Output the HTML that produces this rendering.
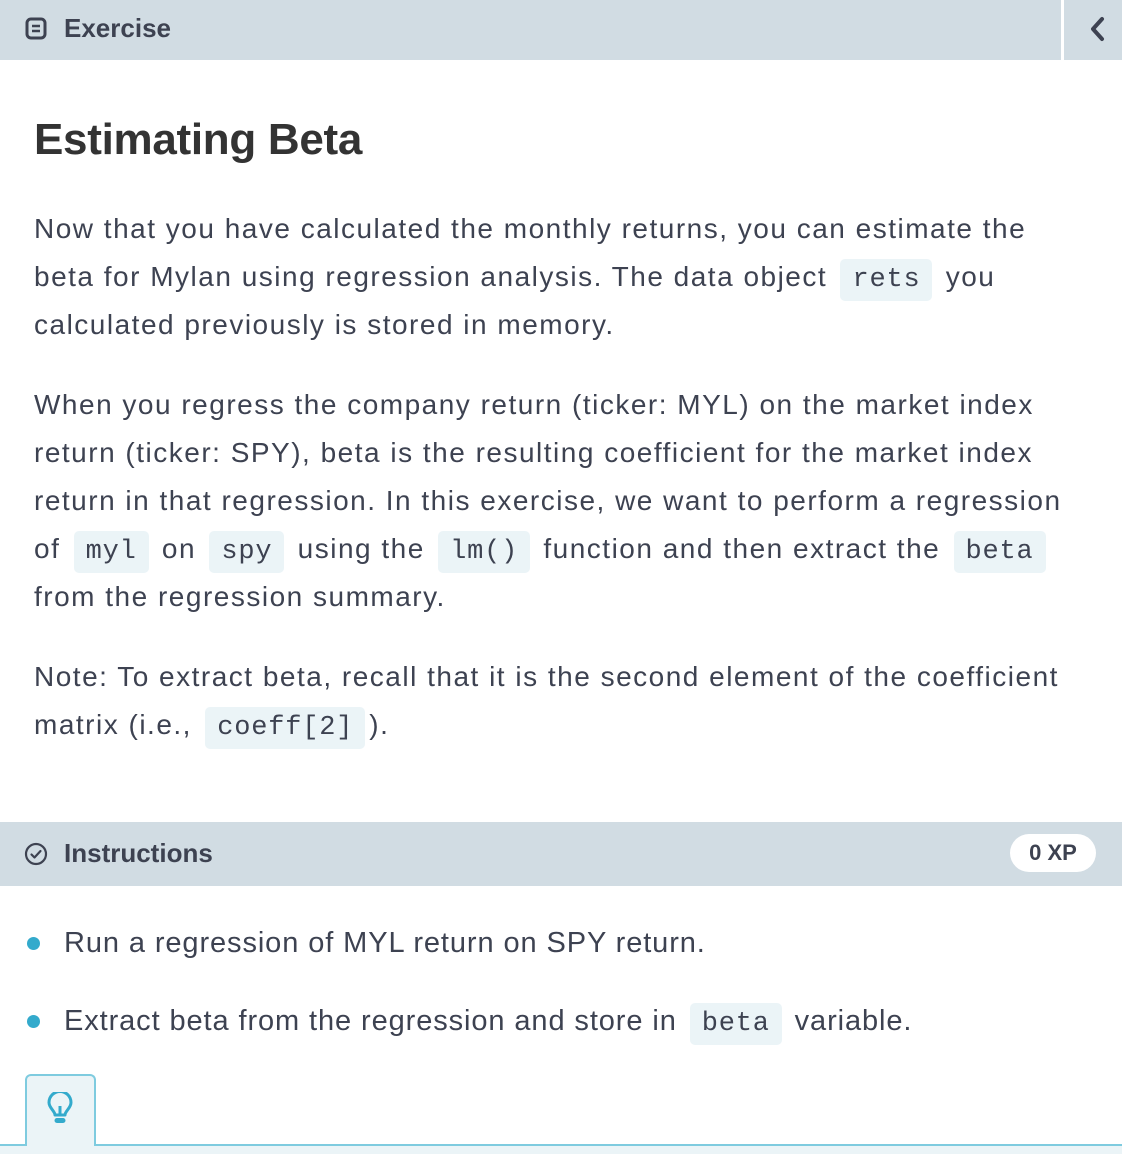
<!DOCTYPE html>
<html><head><meta charset="utf-8"><style>
*{margin:0;padding:0;box-sizing:border-box}
body{width:1122px;height:1154px;background:#fff;position:relative;overflow:hidden;font-family:"Liberation Sans",sans-serif;color:#3d4251}
.hdr{position:absolute;left:0;top:0;width:1122px;height:60px;background:#d1dce3}
.sep{position:absolute;left:1061px;top:0;width:3px;height:60px;background:#fff}
.htxt{position:absolute;left:64px;top:13px;font-size:26px;font-weight:bold;color:#3d4251}
h1{position:absolute;left:34px;top:115px;font-size:44px;font-weight:bold;color:#333;letter-spacing:-0.3px}
.l{position:absolute;left:34px;font-size:28px;white-space:nowrap;height:48px;line-height:48px;letter-spacing:1.5px}
code{font-family:"Liberation Mono",monospace;font-size:27px;background:#ebf4f7;border-radius:5px;padding:6px 12px;margin:0 4px;color:#3d4251;letter-spacing:0.8px}
.ibar{position:absolute;left:0;top:822px;width:1122px;height:64px;background:#d1dce3}
.xp{position:absolute;left:1010px;top:834px;width:86px;height:38px;border-radius:19px;background:#fff;font-size:22px;font-weight:bold;text-align:center;line-height:38px}
.dot{position:absolute;left:27px;width:13px;height:13px;border-radius:50%;background:#33aacc}
</style></head><body>
<div class="hdr"></div><div class="sep"></div>
<svg style="position:absolute;left:25px;top:17px" width="22" height="24" viewBox="0 0 22 24"><rect x="2" y="2" width="18" height="19" rx="4" fill="none" stroke="#3d4251" stroke-width="3"/><line x1="7" y1="9" x2="15" y2="9" stroke="#3d4251" stroke-width="2.5"/><line x1="7" y1="14" x2="15" y2="14" stroke="#3d4251" stroke-width="2.5"/></svg>
<div class="htxt">Exercise</div>
<svg style="position:absolute;left:1088px;top:16px" width="20" height="26" viewBox="0 0 20 26"><path d="M14 3 L5 13 L14 23" fill="none" stroke="#3d4251" stroke-width="4" stroke-linecap="round" stroke-linejoin="round"/></svg>
<h1>Estimating Beta</h1>
<div class="l" style="top:205px">Now that you have calculated the monthly returns, you can estimate the</div>
<div class="l" style="top:253px">beta for Mylan using regression analysis. The data object <code>rets</code> you</div>
<div class="l" style="top:301px">calculated previously is stored in memory.</div>
<div class="l" style="top:381px">When you regress the company return (ticker: MYL) on the market index</div>
<div class="l" style="top:429px">return (ticker: SPY), beta is the resulting coefficient for the market index</div>
<div class="l" style="top:477px">return in that regression. In this exercise, we want to perform a regression</div>
<div class="l" style="top:525px">of <code>myl</code> on <code>spy</code> using the <code>lm()</code> function and then extract the <code>beta</code></div>
<div class="l" style="top:573px">from the regression summary.</div>
<div class="l" style="top:653px">Note: To extract beta, recall that it is the second element of the coefficient</div>
<div class="l" style="top:701px">matrix (i.e., <code>coeff[2]</code>).</div>
<div class="ibar"></div>
<svg style="position:absolute;left:24px;top:842px" width="24" height="24" viewBox="0 0 24 24"><circle cx="12" cy="12" r="10" fill="none" stroke="#3d4251" stroke-width="2.2"/><path d="M7.5 12.5 L10.5 15.5 L16.5 9" fill="none" stroke="#3d4251" stroke-width="2.2" stroke-linecap="round" stroke-linejoin="round"/></svg>
<div class="htxt" style="top:838px">Instructions</div>
<div class="xp">0 XP</div>
<div class="dot" style="top:937px"></div>
<div class="l" style="left:64px;top:919px;font-size:29px;letter-spacing:0.9px">Run a regression of MYL return on SPY return.</div>
<div class="dot" style="top:1015px"></div>
<div class="l" style="left:64px;top:997px;font-size:29px;letter-spacing:0.9px">Extract beta from the regression and store in <code>beta</code> variable.</div>
<div style="position:absolute;left:0;top:1144px;width:1122px;height:10px;background:#ebf4f7;border-top:2px solid #7ecbdf"></div>
<div style="position:absolute;left:25px;top:1074px;width:71px;height:72px;background:#ebf4f7;border:2px solid #7ecbdf;border-bottom:none;border-radius:6px 6px 0 0"></div>
<svg style="position:absolute;left:46px;top:1092px" width="28" height="36" viewBox="0 0 28 36"><path d="M9 23 C9 19 3 16 3 10.5 A11 11 0 0 1 25 10.5 C25 16 19 19 19 23 Z" fill="none" stroke="#33aacc" stroke-width="3" stroke-linejoin="round"/><line x1="14" y1="14" x2="14" y2="22" stroke="#33aacc" stroke-width="3"/><rect x="8.5" y="26" width="11" height="5" rx="2.5" fill="#33aacc"/></svg>
</body></html>
